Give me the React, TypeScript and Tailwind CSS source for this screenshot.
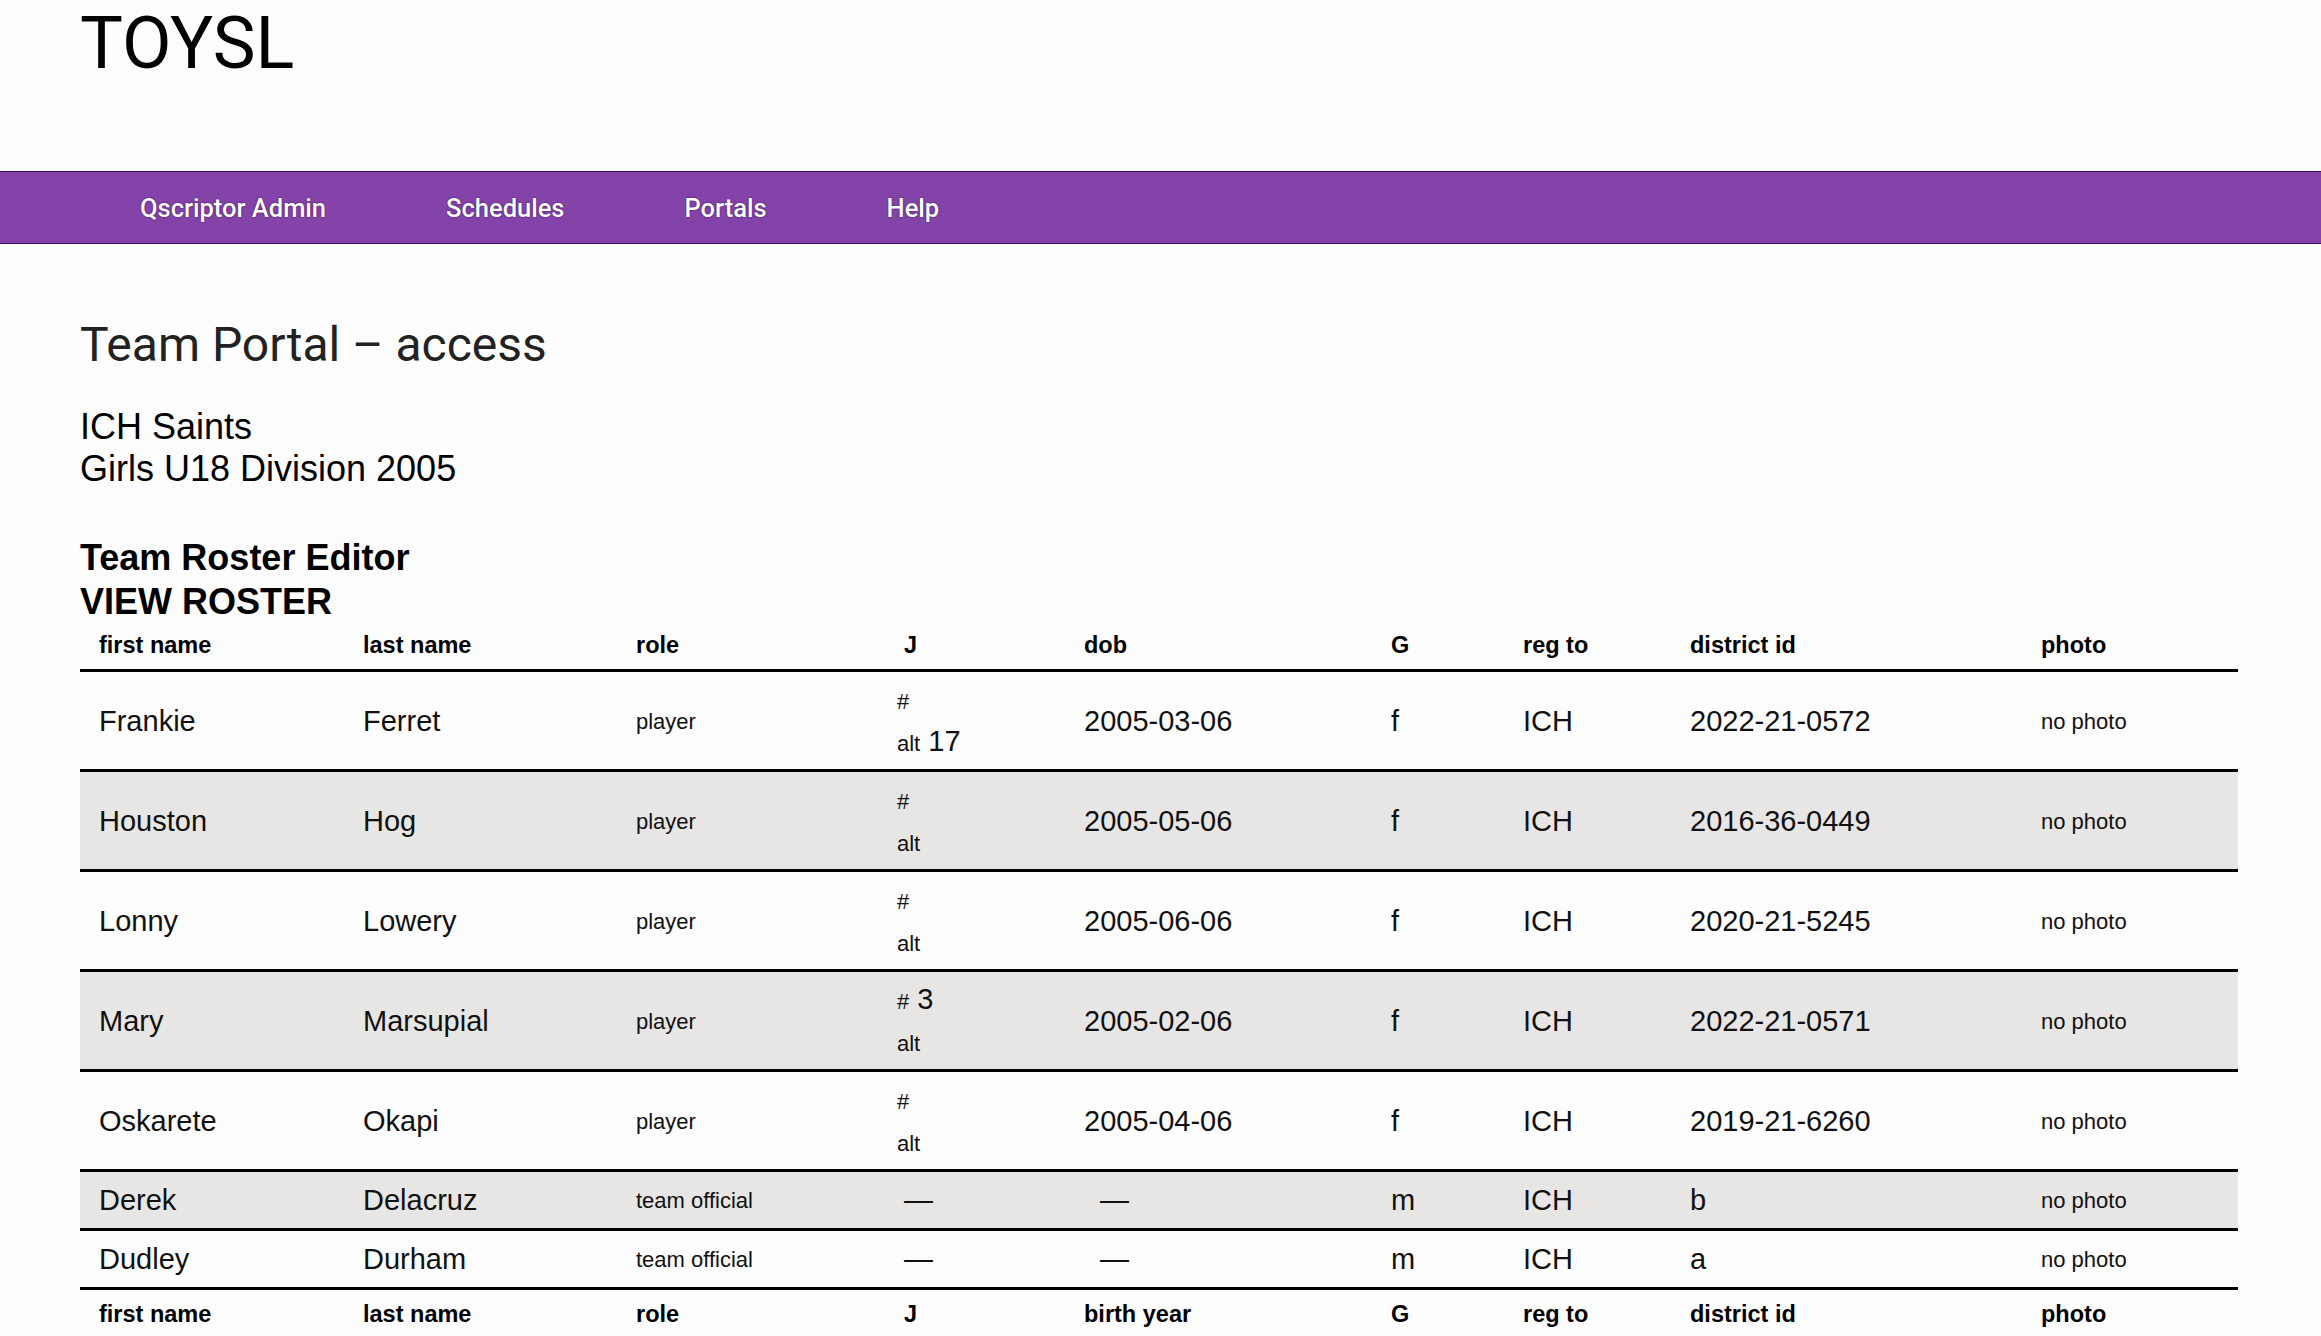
import React from "react";

type Member = {
  first: string;
  last: string;
  role: "player" | "team official";
  num?: string;
  alt?: string;
  dob?: string;
  g: string;
  reg: string;
  district: string;
};

const ROSTER: Member[] = [
  { first: "Frankie", last: "Ferret", role: "player", num: "", alt: "17", dob: "2005-03-06", g: "f", reg: "ICH", district: "2022-21-0572" },
  { first: "Houston", last: "Hog", role: "player", num: "", alt: "", dob: "2005-05-06", g: "f", reg: "ICH", district: "2016-36-0449" },
  { first: "Lonny", last: "Lowery", role: "player", num: "", alt: "", dob: "2005-06-06", g: "f", reg: "ICH", district: "2020-21-5245" },
  { first: "Mary", last: "Marsupial", role: "player", num: "3", alt: "", dob: "2005-02-06", g: "f", reg: "ICH", district: "2022-21-0571" },
  { first: "Oskarete", last: "Okapi", role: "player", num: "", alt: "", dob: "2005-04-06", g: "f", reg: "ICH", district: "2019-21-6260" },
  { first: "Derek", last: "Delacruz", role: "team official", g: "m", reg: "ICH", district: "b" },
  { first: "Dudley", last: "Durham", role: "team official", g: "m", reg: "ICH", district: "a" },
];

const COLS =
  "grid grid-cols-[264px_273px_261px_187px_307px_132px_167px_351px_216px] w-[2158px]";

const NAV = ["Qscriptor Admin", "Schedules", "Portals", "Help"];

function HeaderRow({ dobLabel, top }: { dobLabel: string; top: string }) {
  return (
    <div className={`${COLS} ${top} items-center border-b-[3px] border-black pb-[10px] text-[23.5px] font-bold leading-[28px] text-black`}>
      <div className="pl-[19px]">first name</div>
      <div className="pl-[19px]">last name</div>
      <div className="pl-[19px]">role</div>
      <div className="pl-[26px]">J</div>
      <div className="pl-[19px]">{dobLabel}</div>
      <div className="pl-[19px]">G</div>
      <div className="pl-[19px]">reg to</div>
      <div className="pl-[19px]">district id</div>
      <div className="pl-[19px]">photo</div>
    </div>
  );
}

function RosterRow({ m, shaded }: { m: Member; shaded: boolean }) {
  const player = m.role === "player";
  return (
    <div
      className={`${COLS} items-center border-b-[3px] border-black pt-[2px] text-[29px] leading-[1.15] text-[#111] ${
        player ? "h-[100px]" : "h-[59px]"
      } ${shaded ? "bg-[#e8e6e4]" : ""}`}
    >
      <div className="pl-[19px]">{m.first}</div>
      <div className="pl-[19px]">{m.last}</div>
      <div className="pl-[19px] text-[22px]">{m.role}</div>
      {player ? (
        <div className="flex flex-col pt-[2px] pl-[19px] text-[22px]">
          <div className="h-[42px] leading-[42px]">
            #{m.num ? <span className="text-[29px] leading-none"> {m.num}</span> : null}
          </div>
          <div className="h-[42px] leading-[42px]">
            alt{m.alt ? <span className="text-[29px] leading-none"> {m.alt}</span> : null}
          </div>
        </div>
      ) : (
        <div className="pl-[26px]">—</div>
      )}
      {player ? <div className="pl-[19px]">{m.dob}</div> : <div className="pl-[35px]">—</div>}
      <div className="pl-[19px]">{m.g}</div>
      <div className="pl-[19px]">{m.reg}</div>
      <div className="pl-[19px]">{m.district}</div>
      <div className="pl-[19px] text-[22px]">no photo</div>
    </div>
  );
}

export default function App() {
  return (
    <div className="min-h-screen bg-[#fdfdfd] font-['Liberation_Sans',Arial,sans-serif] text-black">
      <header className="px-[80px] pt-[8px] pb-[91px]">
        <h1 className="font-['Roboto',sans-serif] text-[72px] leading-none font-normal text-black">TOYSL</h1>
      </header>

      <nav className="flex h-[73px] items-center border-y border-[#3a0d6b] bg-[#8443a9] pt-[2px] pl-[80px] font-['Roboto',sans-serif] text-[25.5px] font-medium text-white [text-shadow:0_0_2px_#3b0a5a]">
        {NAV.map((item) => (
          <a key={item} className="px-[60px]">
            {item}
          </a>
        ))}
      </nav>

      <main className="px-[80px] pb-[40px]">
        <h2 className="mt-[73px] font-['Roboto',sans-serif] text-[48px] leading-[56px] font-normal text-[#222]">
          Team Portal – access
        </h2>

        <div className="mt-[33px] text-[36px] leading-[42px]">
          <div>ICH Saints</div>
          <div>Girls U18 Division 2005</div>
        </div>

        <div className="mt-[46px] text-[36px] leading-[44px] font-bold">
          <div>Team Roster Editor</div>
          <div>VIEW ROSTER</div>
        </div>

        <div>
          <HeaderRow dobLabel="dob" top="pt-[7px]" />
          {ROSTER.map((m, i) => (
            <RosterRow key={m.first} m={m} shaded={i % 2 === 1} />
          ))}
          <HeaderRow dobLabel="birth year" top="pt-[10px]" />
        </div>
      </main>
    </div>
  );
}
